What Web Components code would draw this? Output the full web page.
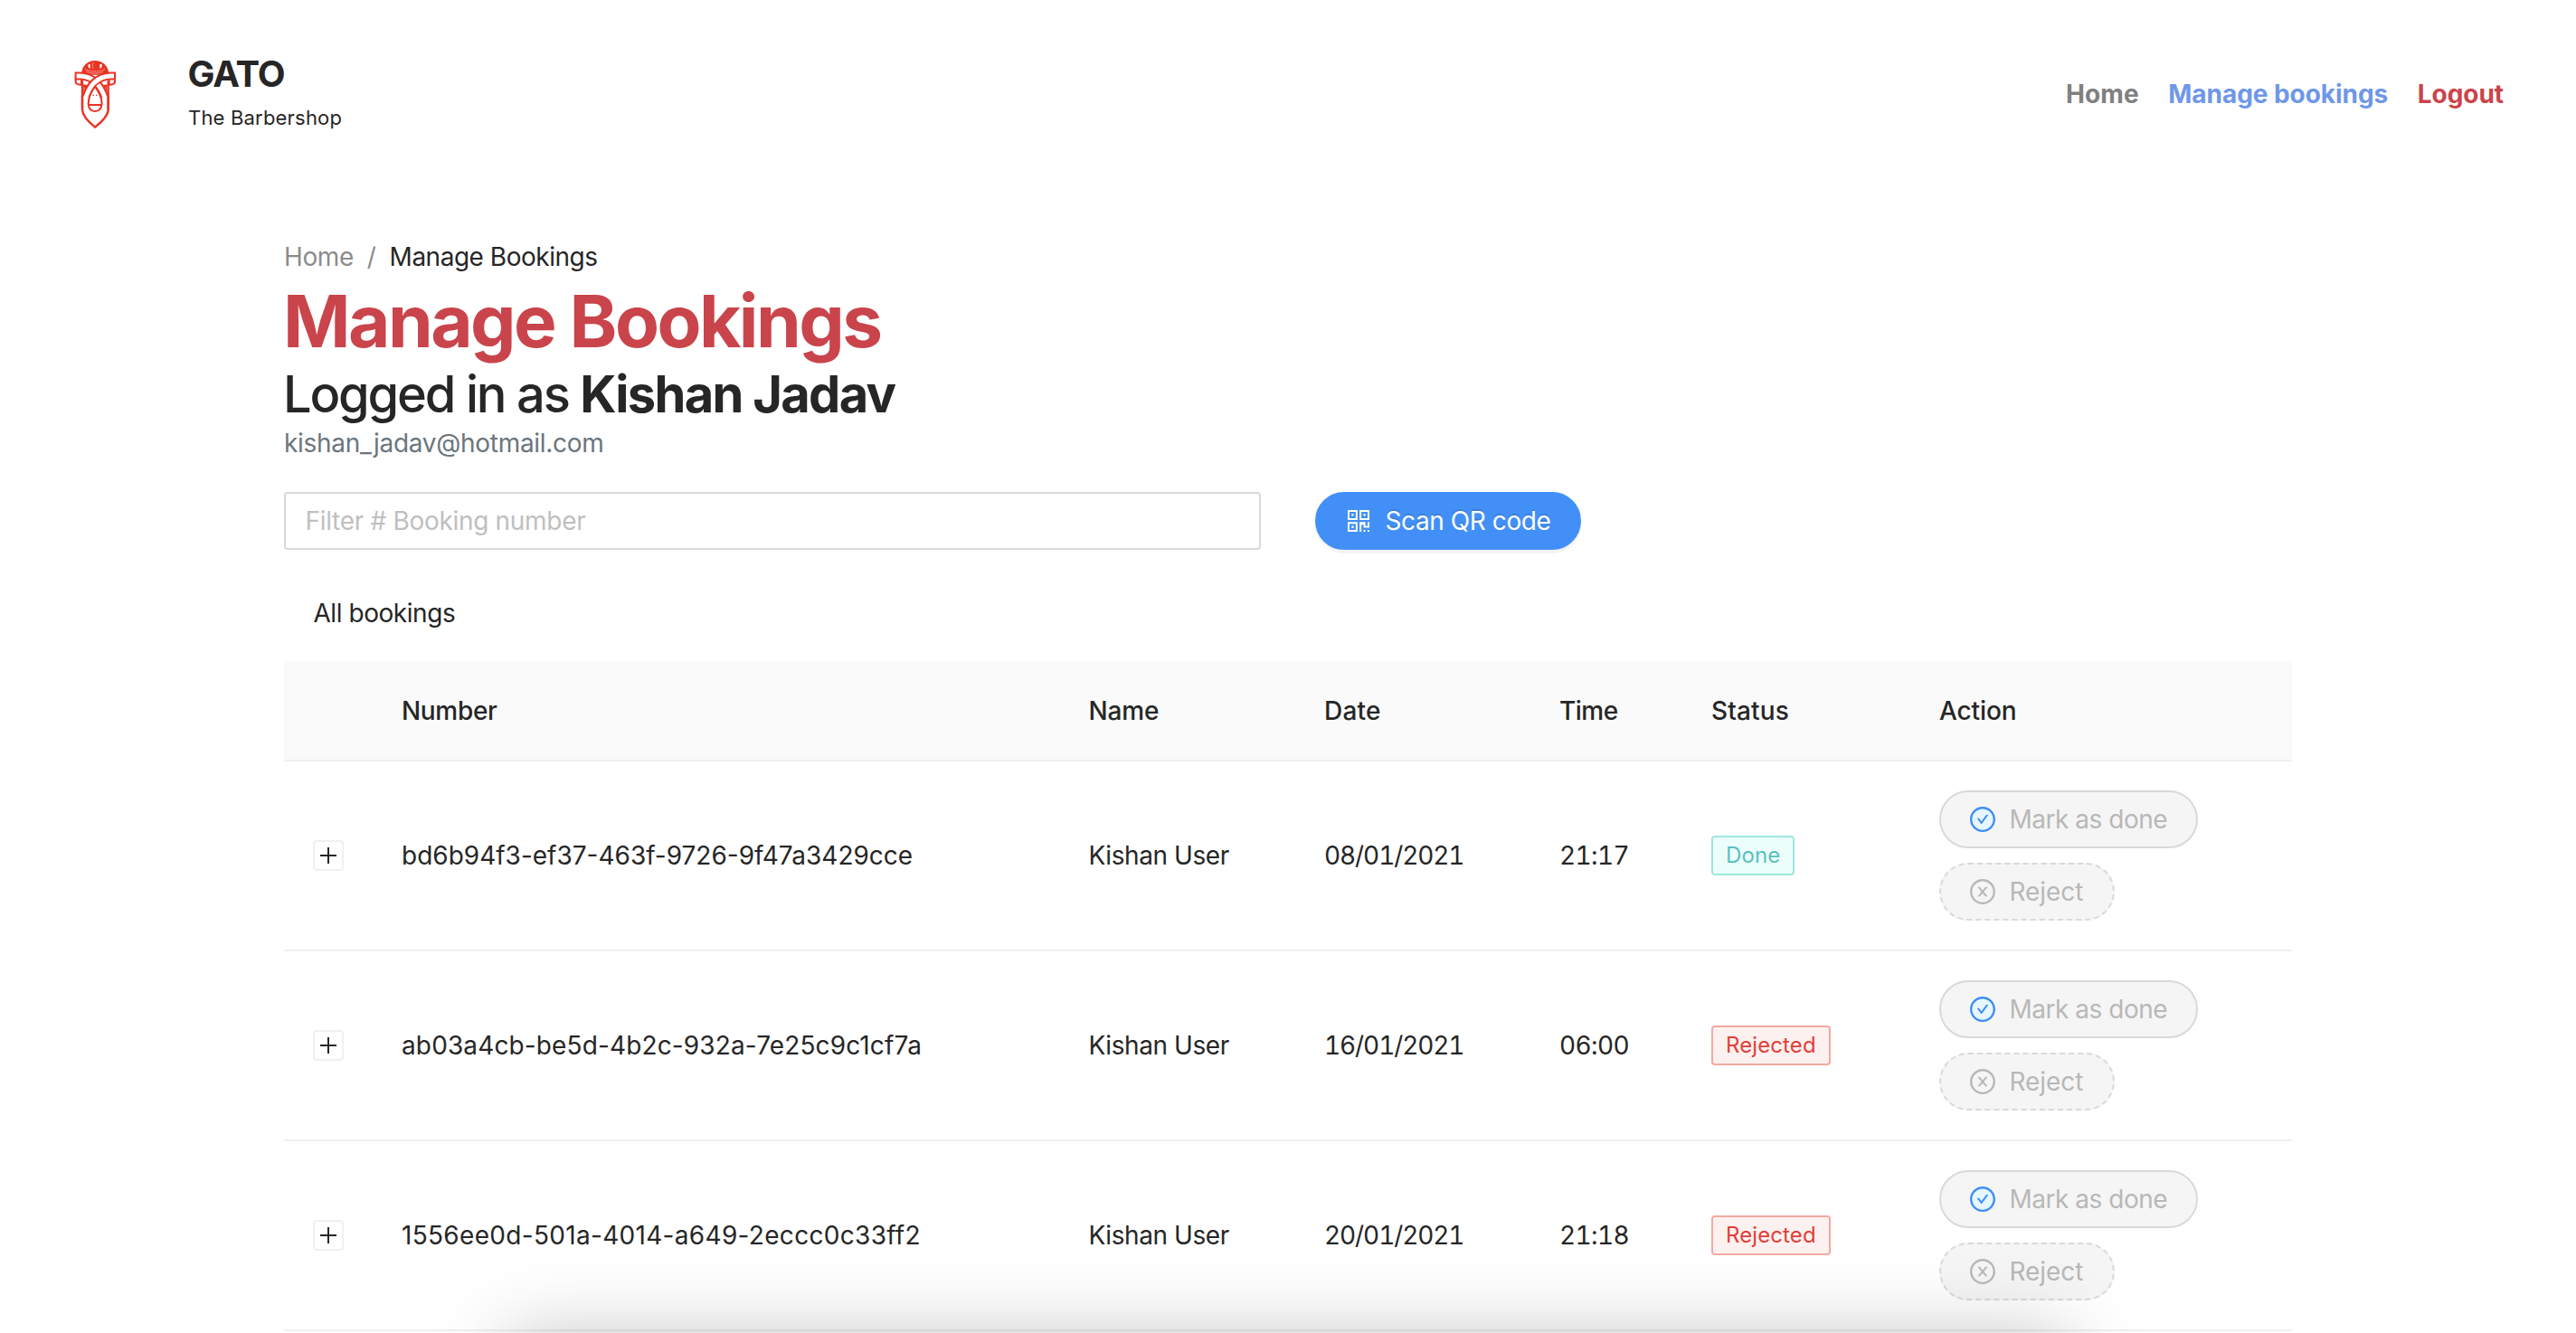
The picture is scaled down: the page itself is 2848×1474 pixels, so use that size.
<!DOCTYPE html>
<html lang="en">
<head>
<meta charset="utf-8">
<title>GATO - Manage Bookings</title>
<style>
  html, body { margin: 0; height: 100%; overflow: hidden; background: #fff; }
  body { font: 28px/44px Inter, "Liberation Sans", sans-serif; color: #262626; }
</style>
</head>
<body>
<booking-app></booking-app>
<script>
const define = (name, html, setup) => customElements.define(name, class extends HTMLElement {
  constructor() {
    super();
    this.attachShadow({ mode: 'open' }).innerHTML = html;
  }
  connectedCallback() {
    if (setup && !this.ready) { this.ready = true; setup.call(this, this.shadowRoot); }
  }
});

/* Icons */
const ICONS = {
  check: `<path fill="#e6f7ff" d="M512 100a412 412 0 100 824 412 412 0 000-824z"/><path d="M512 64C264.6 64 64 264.6 64 512s200.6 448 448 448 448-200.6 448-448S759.4 64 512 64zm0 820c-205.4 0-372-166.6-372-372s166.6-372 372-372 372 166.6 372 372-166.6 372-372 372z"/><path d="M699 353h-46.9c-10.2 0-19.9 4.9-25.9 13.3L469 584.3l-71.2-98.8c-6-8.3-15.6-13.3-25.9-13.3H325c-6.5 0-10.3 7.4-6.5 12.7l124.6 172.8a31.8 31.8 0 0051.7 0l210.6-292c3.9-5.3.1-12.7-6.4-12.7z"/>`,
  close: `<path d="M685.4 354.8c0-4.4-3.6-8-8-8l-66 .3L512 465.6l-99.3-118.4-66.1-.3c-4.4 0-8 3.5-8 8 0 1.9.7 3.7 1.9 5.2l130.1 155L340.5 670a8.32 8.32 0 00-1.9 5.2c0 4.4 3.6 8 8 8l66.1-.3L512 564.4l99.3 118.4 66 .3c4.4 0 8-3.5 8-8 0-1.9-.7-3.7-1.9-5.2L553.5 515l130.1-155c1.2-1.4 1.8-3.3 1.8-5.2z"/><path d="M512 65C264.6 65 64 265.6 64 513s200.6 448 448 448 448-200.6 448-448S759.4 65 512 65zm0 820c-205.4 0-372-166.6-372-372s166.6-372 372-372 372 166.6 372 372-166.6 372-372 372z"/>`,
  qrcode: `<path d="M468 128H160c-17.7 0-32 14.3-32 32v308c0 4.4 3.6 8 8 8h332c4.4 0 8-3.6 8-8V136c0-4.4-3.6-8-8-8zm-56 284H192V192h220v220zm-138-74h56c4.4 0 8-3.6 8-8v-56c0-4.4-3.6-8-8-8h-56c-4.4 0-8 3.6-8 8v56c0 4.4 3.6 8 8 8zm194 210H136c-4.4 0-8 3.6-8 8v308c0 17.7 14.3 32 32 32h308c4.4 0 8-3.6 8-8V556c0-4.4-3.6-8-8-8zm-56 284H192V612h220v220zm-138-74h56c4.4 0 8-3.6 8-8v-56c0-4.4-3.6-8-8-8h-56c-4.4 0-8 3.6-8 8v56c0 4.4 3.6 8 8 8zm590-630H556c-4.4 0-8 3.6-8 8v332c0 4.4 3.6 8 8 8h332c4.4 0 8-3.6 8-8V160c0-17.7-14.3-32-32-32zm-32 284H612V192h220v220zm-138-74h56c4.4 0 8-3.6 8-8v-56c0-4.4-3.6-8-8-8h-56c-4.4 0-8 3.6-8 8v56c0 4.4 3.6 8 8 8zm194 210h-48c-4.4 0-8 3.6-8 8v134h-78V556c0-4.4-3.6-8-8-8H556c-4.4 0-8 3.6-8 8v332c0 4.4 3.6 8 8 8h48c4.4 0 8-3.6 8-8V644h78v102c0 4.4 3.6 8 8 8h190c4.4 0 8-3.6 8-8V556c0-4.4-3.6-8-8-8zM746 832h-48c-4.4 0-8 3.6-8 8v48c0 4.4 3.6 8 8 8h48c4.4 0 8-3.6 8-8v-48c0-4.4-3.6-8-8-8zm142 0h-48c-4.4 0-8 3.6-8 8v48c0 4.4 3.6 8 8 8h48c4.4 0 8-3.6 8-8v-48c0-4.4-3.6-8-8-8z"/>`
};
define('ui-icon', `<style>:host{display:block;flex:none;width:28px;height:28px}svg{display:block;width:100%;height:100%;fill:currentColor}</style><svg viewBox="64 64 896 896"></svg>`,
  function (root) {
    root.querySelector('svg').innerHTML = ICONS[this.getAttribute('name')] || '';
  });

define('brand-logo', `<style>:host{display:block;width:50px;height:78px}svg{display:block;width:100%;height:100%}</style>
<svg viewBox="62 45 150 234" fill="none" stroke="#ea3323" stroke-width="6">
  <path d="M92 98C92 64 118 51 137 51S183 64 183 98Z" fill="#ea3323" stroke="none"/>
  <path d="M115 64l6-2v15l-5-2q-3-6-1-11zM160 64l-7-2v15l5-2q4-6 2-11z" fill="#fff" stroke="none"/>
  <path d="M132 58q-6 10 0 20M104 78q8 8 33 9 25-1 33-9M108 87q12 6 29 6 17 0 29-6" stroke="#fff" stroke-width="1.8" stroke-dasharray="5 1.5"/>
  <path d="M95 118V214Q96 238 137 272Q180 238 181 214V118" fill="#fff" stroke-width="7"/>
  <path d="M98 130l17 3-15 29zM178 130l-17 3 15 29z" fill="#ea3323" stroke="none"/>
  <path d="M103 140l5 2-5 9zM173 140l-5 2 5 9z" fill="#fff" stroke="none"/>
  <path d="M73 108V122Q75 131 92 131V112ZM203 108V122Q201 131 184 131V112Z" fill="#fff"/>
  <path d="M70 102H88C130 104 158 132 169 172" stroke-width="27"/>
  <path d="M76 102H88C130 104 157 132 171 178" stroke="#fff" stroke-width="15"/>
  <path d="M206 102H188C146 104 118 132 107 172" stroke-width="27"/>
  <path d="M200 102H188C146 104 119 132 105 178" stroke="#fff" stroke-width="15"/>
  <path d="M95 168V214M181 168V214" stroke-width="7"/>
  <path d="M137 137C126 152 115 173 115 195Q117 219 137 219T160 195C160 173 148 152 137 137Z" fill="#fff"/>
  <path d="M117 198H158"/>
  <path d="M130 166h4M140 166h4" stroke-width="4"/>
</svg>`);

/* Header */
define('nav-link', `<style>:host{display:block;font-weight:700;letter-spacing:-.05px;color:#808080}:host(:first-child){letter-spacing:.1px}:host([tone=active]){color:#6f97e8}:host([tone=danger]){color:#ca444b}</style><slot></slot>`);
define('site-header', `<style>
  :host{display:flex;align-items:center;height:208px;box-sizing:border-box;padding:0 80px}
  brand-logo{margin-right:77.5px}
  .brand{flex:1;padding-bottom:9px}
  .name{font-size:40px;line-height:56px;font-weight:700;letter-spacing:-1.1px;padding-top:4px}
  .sub{font-size:22px;line-height:40px;letter-spacing:.19px;margin-left:.5px}
  nav{display:flex;gap:32.5px}
</style>
<brand-logo></brand-logo>
<div class="brand"><div class="name">GATO</div><div class="sub">The Barbershop</div></div>
<nav><nav-link>Home</nav-link><nav-link tone="active">Manage bookings</nav-link><nav-link tone="danger">Logout</nav-link></nav>`);

/* Page heading */
define('bread-crumb', `<style>:host{display:flex;gap:15px;color:#8c8c8c;letter-spacing:-.4px}b{font-weight:400;color:#262626;letter-spacing:-.48px}</style>
<span>Home</span><span>/</span><b>Manage Bookings</b>`);
define('page-heading', `<style>
  :host{display:block}
  h1,h2{margin:0}
  h1{font-size:80px;line-height:98px;font-weight:700;letter-spacing:-2.55px;color:#ca444b;margin-left:-1px}
  h2{font-size:56px;line-height:64px;font-weight:500;letter-spacing:-2.2px;margin-left:-1px}
  h2 b{font-weight:700;letter-spacing:-1.7px}
  .mail{color:#6c757d;letter-spacing:-.3px}
</style>
<h1>Manage Bookings</h1><h2>Logged in as <b>Kishan Jadav</b></h2><div class="mail">kishan_jadav@hotmail.com</div>`);

/* Controls */
define('text-field', `<style>:host{display:block;box-sizing:border-box;width:1080px;height:64px;border:2px solid #d9d9d9;border-radius:4px;padding:8px 21.5px;color:#bfbfbf;letter-spacing:-.31px}</style><slot></slot>`);
define('pill-button', `<style>
  :host{display:flex;align-items:center;box-sizing:border-box;width:max-content;height:64px;padding:0 31.5px 0 32px;gap:16px;border:2px solid #d9d9d9;border-radius:32px;background:#f5f5f5;color:#b8b8b8;letter-spacing:-.48px}
  :host([kind=dashed]){border-style:dashed;letter-spacing:-.05px;padding-right:32.5px}
  :host([kind=primary]){border-color:#4290f7;background:#4290f7;color:#fff;letter-spacing:-.42px;text-shadow:0 -2px 0 rgba(0,0,0,.12);box-shadow:0 4px 0 rgba(0,0,0,.045)}
  ui-icon[name=check]{color:#3f8ef7}
  .t{display:block;margin-left:-.5px}
</style><ui-icon></ui-icon><span class="t"><slot></slot></span>`,
  function (root) {
    const icon = document.createElement('ui-icon');
    icon.setAttribute('name', this.getAttribute('icon'));
    root.querySelector('ui-icon').replaceWith(icon);
  });
define('status-tag', `<style>
  :host{display:block;box-sizing:border-box;width:max-content;height:44px;padding:0 14px;border:2px solid #9ee6de;border-radius:4px;background:#ebfefb;color:#5bc0c2;font-size:24px;line-height:40px;letter-spacing:.1px}
  :host([state=Rejected]){border-color:#f2a9a2;background:#fdf1f0;color:#e33e38}
</style><slot></slot>`);
define('expand-toggle', `<style>:host{display:grid;place-items:center;box-sizing:border-box;width:34px;height:34px;border:2px solid #f0f0f0;border-radius:4px;background:#fff}svg{display:block}</style>
<svg width="18" height="18"><path d="M0 9H18M9 0V18" stroke="#262626" stroke-width="2"/></svg>`);

/* Table */
const COLS = '98px 759.5px 260.5px 260px 168px 252px 1fr';
const CELL = `.c{box-sizing:border-box;padding-left:32px}:host{display:grid;align-items:center;grid-template-columns:${COLS};border-bottom:2px solid #f0f0f0}`;
define('table-head', `<style>${CELL}:host{height:108px;background:#fafafa;font-weight:500}.c{letter-spacing:var(--ls)}</style>
<span></span><span class="c" style="--ls:-.33px">Number</span><span class="c" style="--ls:-.18px">Name</span><span class="c" style="--ls:.25px">Date</span><span class="c" style="--ls:-.5px">Time</span><span class="c" style="--ls:.15px">Status</span><span class="c" style="--ls:-.1px">Action</span>`);
define('booking-row', `<style>${CELL}:host{height:208px}
  .n{font-feature-settings:"tnum"}
  .id{letter-spacing:var(--id-spacing,0)}
  .who{letter-spacing:-.42px}
  .date{letter-spacing:-1.1px}
  .time{letter-spacing:-.6px}
  .acts{display:grid;gap:16px}
</style>
<div class="c"><expand-toggle></expand-toggle></div>
<div class="c id"></div><div class="c who"></div><div class="c n date"></div><div class="c n time"></div>
<div class="c"><status-tag></status-tag></div>
<div class="c acts"><pill-button icon="check">Mark as done</pill-button><pill-button icon="close" kind="dashed">Reject</pill-button></div>`,
  function (root) {
    for (const key of ['id', 'who', 'date', 'time']) root.querySelector('.' + key).textContent = this.dataset[key];
    const tag = root.querySelector('status-tag');
    tag.setAttribute('state', this.dataset.status);
    tag.textContent = this.dataset.status;
  });
define('booking-table', `<style>:host{display:block}.title{height:108px;line-height:108px;padding-left:32.5px;letter-spacing:-.45px}</style>
<div class="title">All bookings</div>
<table-head></table-head>
<booking-row data-id="bd6b94f3-ef37-463f-9726-9f47a3429cce" data-who="Kishan User" data-date="08/01/2021" data-time="21:17" data-status="Done"></booking-row>
<booking-row style="--id-spacing:.13px" data-id="ab03a4cb-be5d-4b2c-932a-7e25c9c1cf7a" data-who="Kishan User" data-date="16/01/2021" data-time="06:00" data-status="Rejected"></booking-row>
<booking-row style="--id-spacing:.31px" data-id="1556ee0d-501a-4014-a649-2eccc0c33ff2" data-who="Kishan User" data-date="20/01/2021" data-time="21:18" data-status="Rejected"></booking-row>`);

/* Overlay panel docked below the fold; only its shadow reaches the viewport */
define('bottom-sheet', `<style>:host{position:fixed;left:560px;right:560px;top:1480px;height:400px;box-shadow:0 0 80px rgba(0,0,0,.25)}</style>`);

define('booking-app', `<style>
  :host{display:block}
  main{display:block;width:2220px;margin:54px auto 0}
  .tools{display:flex;gap:60px;margin:32px 0 16px}
</style>
<site-header></site-header>
<main>
  <bread-crumb></bread-crumb>
  <page-heading></page-heading>
  <div class="tools"><text-field>Filter # Booking number</text-field><pill-button kind="primary" icon="qrcode">Scan QR code</pill-button></div>
  <booking-table></booking-table>
</main>
<bottom-sheet></bottom-sheet>`);
</script>
</body>
</html>
